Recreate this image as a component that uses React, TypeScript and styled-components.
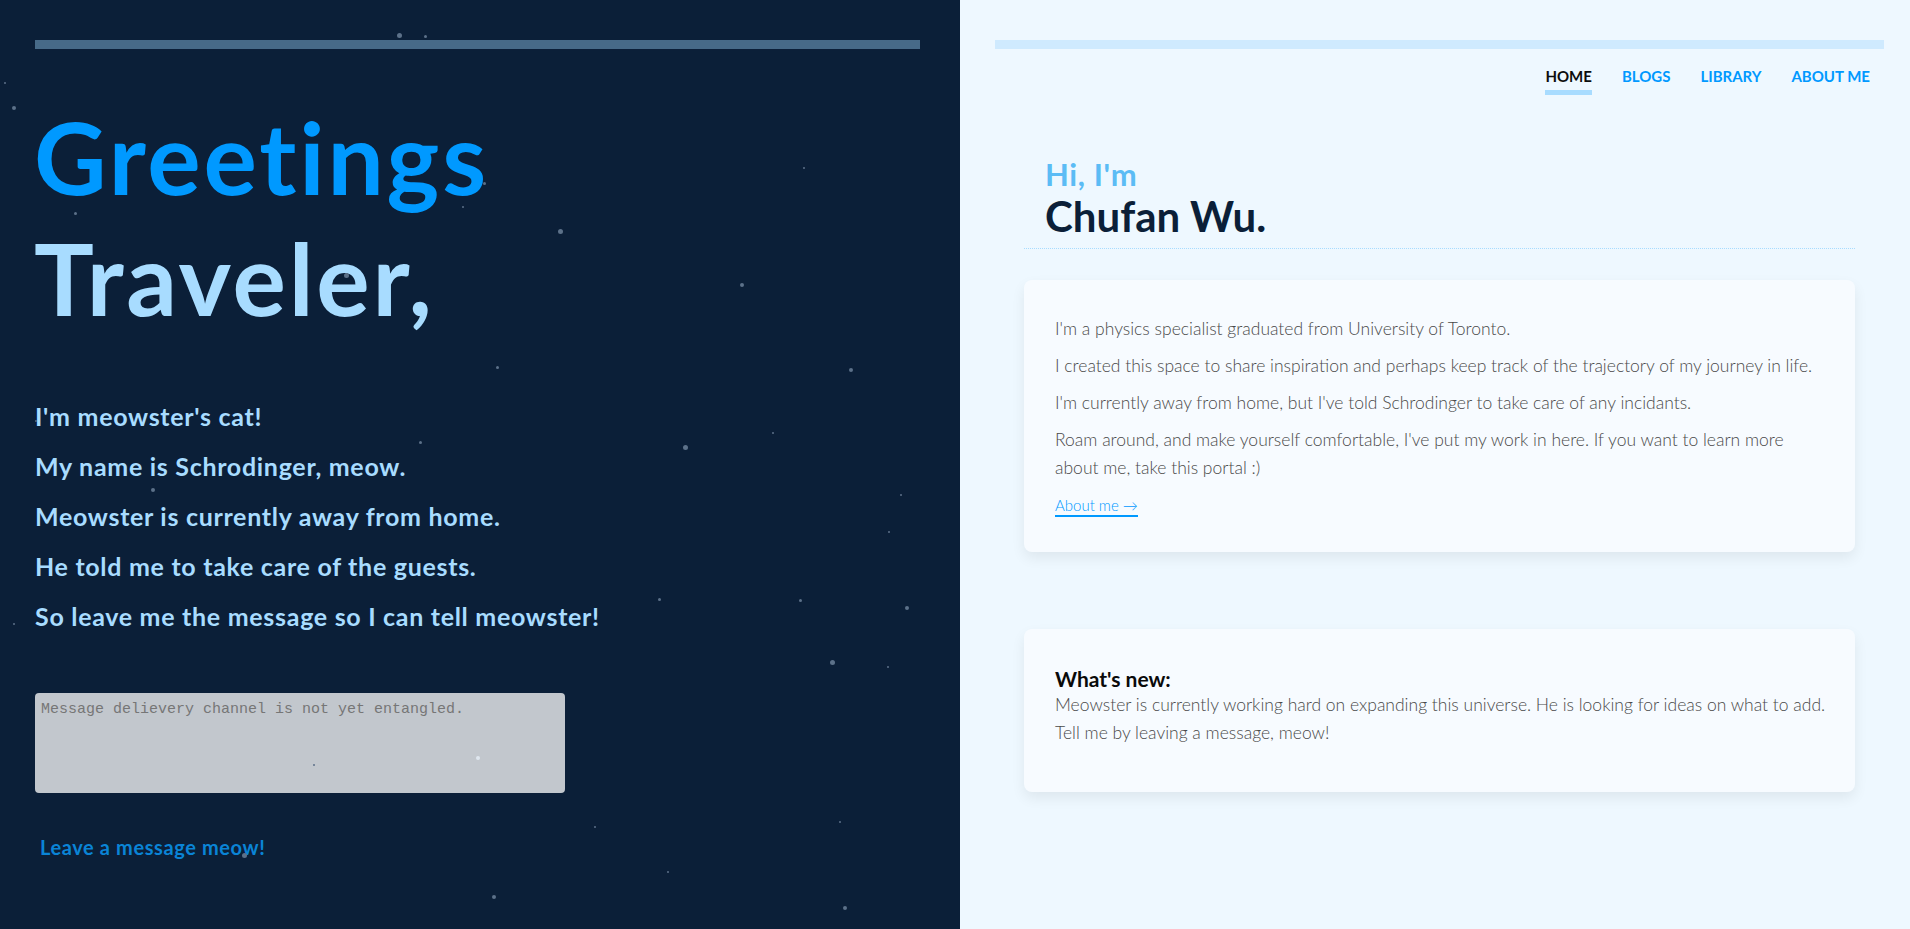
import React from "react";
import styled, { createGlobalStyle } from "styled-components";

const Global = createGlobalStyle`
  html, body { margin: 0; padding: 0; }
  body { font-family: "Lato", "Open Sans", sans-serif; background: #0b1f38; }
  * { box-sizing: border-box; }
`;

const Page = styled.div`
  display: grid;
  grid-template-columns: 960px 1fr;
  width: 1910px;
  height: 929px;
  overflow: hidden;
`;

const Left = styled.section`
  position: relative;
  background: #0b1f38;
  padding: 40px 40px 0 35px;
  display: flex;
  flex-direction: column;
`;

const Right = styled.section`
  background: #eef8ff;
  padding: 40px 26px 0 35px;
  display: flex;
  flex-direction: column;
`;

const TopBar = styled.div<{ $color: string }>`
  height: 9px;
  background: ${(p) => p.$color};
  flex-shrink: 0;
`;

const Title = styled.h1`
  margin: 47px 0 0 -1px;
  font-weight: 700;
  font-size: 100px;
  line-height: 121px;
  letter-spacing: 2.8px;
`;

const TitleLine = styled.span<{ $color: string }>`
  display: block;
  color: ${(p) => p.$color};
`;

const Lines = styled.div`
  margin-top: 62px;
  display: flex;
  flex-direction: column;
  gap: 17px;
`;

const Line = styled.p`
  margin: 0;
  color: #a8dcff;
  font-weight: 700;
  font-size: 25px;
  line-height: 33px;
  letter-spacing: 0.7px;
`;

const MessageBox = styled.textarea`
  margin-top: 60px;
  width: 530px;
  height: 100px;
  border: none;
  border-radius: 4px;
  background: #c2c7cd;
  padding: 8px 6px;
  resize: none;
  font-family: "Liberation Mono", monospace;
  font-size: 15px;
  line-height: 17px;
  &::placeholder { color: #767676; }
`;

const SendLink = styled.a`
  margin: 42px 0 0 5px;
  color: #0a84d6;
  font-weight: 700;
  font-size: 20px;
  letter-spacing: 0.6px;
  text-decoration: none;
  align-self: flex-start;
`;

const Star = styled.span<{ $size: number; $light?: boolean }>`
  position: absolute;
  width: ${(p) => p.$size}px;
  height: ${(p) => p.$size}px;
  border-radius: 50%;
  background: ${(p) => (p.$light ? "#dfe7ef" : "#5c7189")};
  z-index: 2;
  pointer-events: none;
`;

const Nav = styled.nav`
  display: flex;
  justify-content: flex-end;
  gap: 30px;
  padding: 17px 14px 0 0;
`;

const NavItem = styled.a<{ $active?: boolean }>`
  display: flex;
  flex-direction: column;
  gap: 4px;
  font-weight: 700;
  font-size: 15px;
  line-height: 20px;
  text-decoration: none;
  color: ${(p) => (p.$active ? "#0d0d0d" : "#0099ff")};
  &::after {
    content: "";
    height: 5px;
    background: ${(p) => (p.$active ? "#a8dcff" : "transparent")};
  }
`;

const Content = styled.div`
  margin: 0 29px 0 29px;
  display: flex;
  flex-direction: column;
`;

const Hero = styled.header`
  margin-top: 62px;
  padding: 0 0 7px 21px;
  border-bottom: 1px dotted #a8dcff;
`;

const Hi = styled.div`
  color: #5bbcf5;
  font-weight: 700;
  font-size: 31px;
  line-height: 34px;
  letter-spacing: 0.6px;
`;

const Name = styled.div`
  color: #0b1f38;
  font-weight: 700;
  font-size: 42px;
  line-height: 50px;
`;

const Card = styled.article<{ $top: number; $pad: string }>`
  margin-top: ${(p) => p.$top}px;
  background: #f7fbff;
  border-radius: 8px;
  box-shadow: 0 6px 14px rgba(0, 0, 0, 0.07);
  padding: ${(p) => p.$pad};
  font-weight: 300;
  color: #4a4a4a;
  font-size: 17.5px;
  line-height: 28px;
`;

const CardText = styled.p`
  margin: 0 0 9px;
`;

const MoreLink = styled.a`
  display: inline-block;
  margin-top: -1px;
  color: #0099ff;
  font-size: 15px;
  line-height: 19px;
  text-decoration: none;
  border-bottom: 2px solid #0099ff;
`;

const NewsTitle = styled.h3`
  margin: 0;
  font-weight: 700;
  font-size: 21px;
  line-height: 24px;
  color: #0a0a0a;
`;

const stars: [number, number, number, boolean?][] = [
  [399, 35, 5], [425, 36, 3], [5, 83, 2], [14, 108, 4], [75, 213, 3], [560, 231, 5],
  [742, 285, 4], [484, 183, 3], [804, 168, 2], [346, 275, 5], [497, 367, 3], [851, 370, 4],
  [420, 442, 3], [685, 447, 5], [153, 490, 4], [901, 495, 2], [36, 421, 2], [889, 532, 2],
  [659, 599, 3], [800, 600, 3], [907, 608, 4], [14, 624, 2], [832, 662, 5], [888, 667, 2],
  [773, 433, 2], [478, 758, 4, true], [314, 765, 2], [595, 827, 2], [244, 855, 5],
  [840, 822, 2], [668, 872, 2], [494, 897, 4], [845, 908, 4], [463, 207, 2],
];

export default function App() {
  return (
    <>
      <Global />
      <Page>
        <Left>
          {stars.map(([x, y, s, l], i) => (
            <Star key={i} $size={s} $light={l} style={{ left: x - s / 2, top: y - s / 2 }} />
          ))}
          <TopBar $color="#476a88" />
          <Title>
            <TitleLine $color="#0099ff">Greetings</TitleLine>
            <TitleLine $color="#a8dcff">Traveler,</TitleLine>
          </Title>
          <Lines>
            <Line>I'm meowster's cat!</Line>
            <Line>My name is Schrodinger, meow.</Line>
            <Line>Meowster is currently away from home.</Line>
            <Line>He told me to take care of the guests.</Line>
            <Line>So leave me the message so I can tell meowster!</Line>
          </Lines>
          <MessageBox placeholder="Message delievery channel is not yet entangled." />
          <SendLink href="#">Leave a message meow!</SendLink>
        </Left>
        <Right>
          <TopBar $color="#cfeafe" />
          <Nav>
            <NavItem href="#" $active>HOME</NavItem>
            <NavItem href="#">BLOGS</NavItem>
            <NavItem href="#">LIBRARY</NavItem>
            <NavItem href="#">ABOUT ME</NavItem>
          </Nav>
          <Content>
            <Hero>
              <Hi>Hi, I'm</Hi>
              <Name>Chufan Wu.</Name>
            </Hero>
            <Card $top={31} $pad="35px 31px 33px">
              <CardText>I'm a physics specialist graduated from University of Toronto.</CardText>
              <CardText>I created this space to share inspiration and perhaps keep track of the trajectory of my journey in life.</CardText>
              <CardText>I'm currently away from home, but I've told Schrodinger to take care of any incidants.</CardText>
              <CardText>Roam around, and make yourself comfortable, I've put my work in here. If you want to learn more about me, take this portal :)</CardText>
              <MoreLink href="#">About me →</MoreLink>
            </Card>
            <Card $top={77} $pad="38px 10px 45px 31px">
              <NewsTitle>What's new:</NewsTitle>
              <div>Meowster is currently working hard on expanding this universe. He is looking for ideas on what to add. Tell me by leaving a message, meow!</div>
            </Card>
          </Content>
        </Right>
      </Page>
    </>
  );
}
